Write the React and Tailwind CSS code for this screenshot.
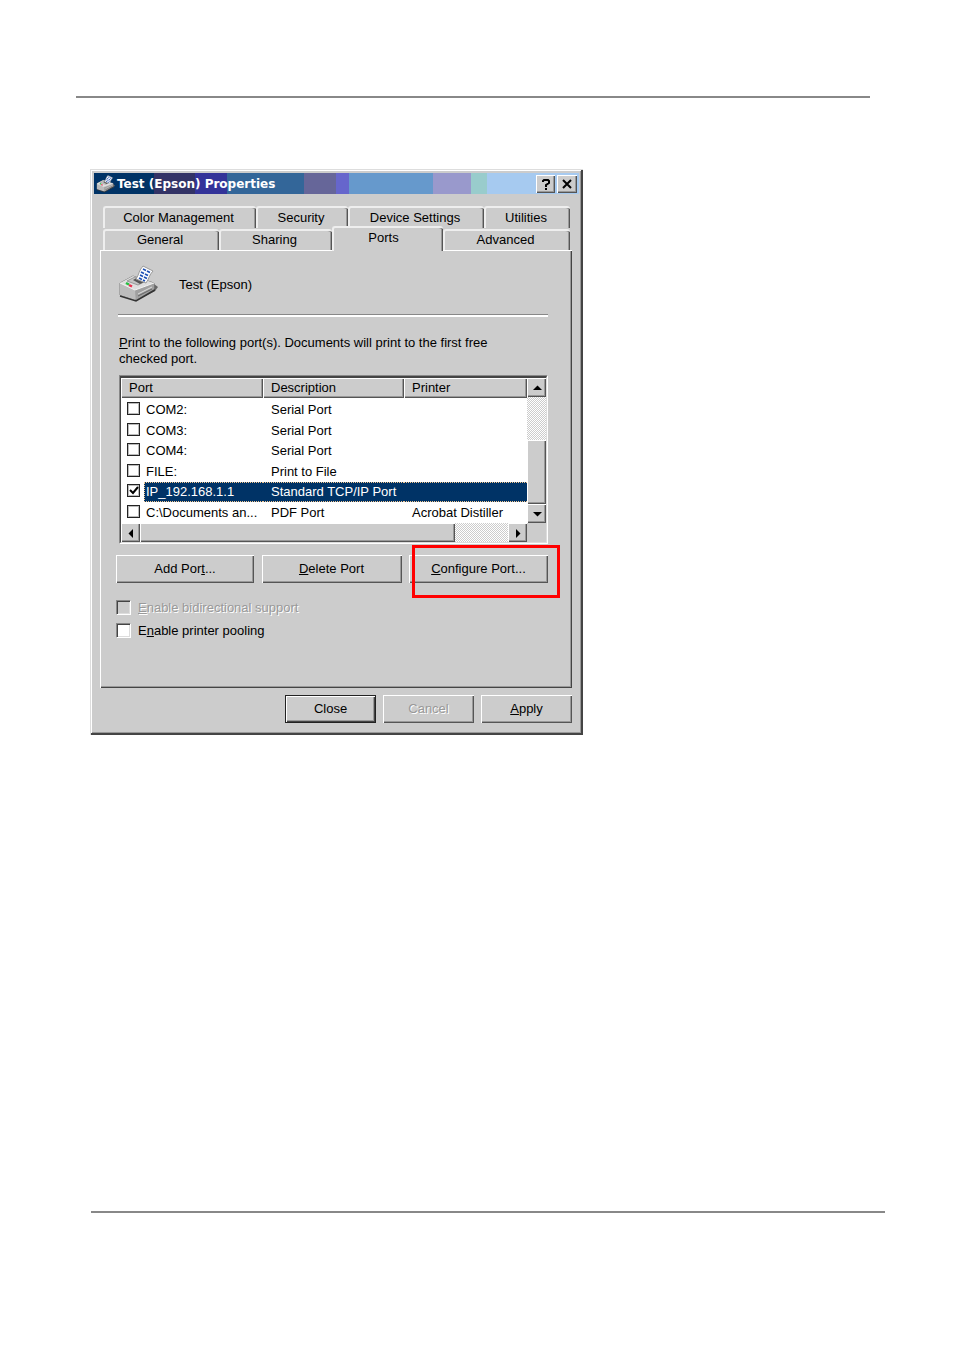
import { useState } from "react";

const RAISED =
  "bg-[#ccc] shadow-[inset_1px_1px_0_#fff,inset_-1px_-1px_0_#555,inset_-2px_-2px_0_#999]";

const TITLE_COLORS =
  "bg-[linear-gradient(90deg,#003366_60px,#333366_60px_101px,#333399_101px_133px,#336699_133px_210px,#666699_210px_242px,#6666cc_242px_255px,#6699cc_255px_339px,#9999cc_339px_377px,#99cccc_377px_393px,#a6caf0_393px)]";

const TRACK = "bg-[repeating-conic-gradient(#fff_0_25%,#ccc_0_50%)] bg-[length:2px_2px]";

const PORTS = [
  { name: "COM2:", description: "Serial Port", printer: "" },
  { name: "COM3:", description: "Serial Port", printer: "" },
  { name: "COM4:", description: "Serial Port", printer: "" },
  { name: "FILE:", description: "Print to File", printer: "" },
  { name: "IP_192.168.1.1", description: "Standard TCP/IP Port", printer: "" },
  { name: "C:\\Documents an...", description: "PDF Port", printer: "Acrobat Distiller" },
];

const PrinterIcon = ({ className }) => (
  <svg viewBox="0 0 40 38" className={className} aria-hidden="true">
    <path d="M19 35 37 26l3-4-4-3Z" fill="#666" />
    <path d="M2 18 15 11 36 18v6L18 35 2 30Z" fill="#b4b4b4" stroke="#808080" strokeLinejoin="round" />
    <path d="M2 18 15 11 36 18 17 25Z" fill="#dedede" />
    <path d="M2 18v12l15 5V25Z" fill="#bcbcbc" />
    <path d="M17 25 36 18v6L18 35Z" fill="#a0a0a0" />
    <path d="M2 18 17 25 36 18" fill="none" stroke="#f4f4f4" />
    <path d="M2 31 18 36 37 25" fill="none" stroke="#333" strokeWidth="1.5" />
    <path d="M20 29 34 22" stroke="#ddd" />
    <path d="M20 31 34 24" stroke="#666" />
    <path d="M9 16 17 12 28 16 20 20Z" fill="#c4c4c4" stroke="#999" />
    <path d="M15 15 22 11 30 15 22 19Z" fill="#555" />
    <path d="M18 14C21 10 21 5 25 1l10 5c-4 4-4 8-7 12Z" fill="#fff" stroke="#999" />
    <path
      d="m25 4 3 1.500m1 .5 3 1.500M23 7l3 1.500m1 .5 3 1.500M22 10l3 1.500m1 .5 3 1.500M21 13l3 1.500m1 .5 2 1"
      stroke="#1c4fb4"
      strokeWidth="1.800"
    />
    <path d="m8 18 3 1.500" stroke="#22c040" strokeWidth="2.500" />
    <path d="m11 20 3 1.500" stroke="#e8304c" strokeWidth="2.500" />
  </svg>
);

const Tab = ({ children, className, selected }) => (
  <button
    type="button"
    role="tab"
    aria-selected={!!selected}
    className={`rounded-t-[3px] border-t-2 border-l-2 border-t-[#eee] border-l-[#eee] bg-[#ccc] pr-1 text-center shadow-[inset_-1px_0_0_#555,inset_-2px_0_0_#999] ${className}`}
  >
    {children}
  </button>
);

const PushButton = ({ children, className = "", ...props }) => (
  <button type="button" className={`h-7 pb-px ${RAISED} ${className}`} {...props}>
    {children}
  </button>
);

const ScrollButton = ({ label, d }) => (
  <button
    type="button"
    aria-label={label}
    className={`flex h-[19px] w-[19px] shrink-0 items-center justify-center ${RAISED}`}
  >
    <svg viewBox="0 0 10 10" className="h-[10px] w-[10px]">
      <path d={d} fill="#000" />
    </svg>
  </button>
);

const PortRow = ({ port, selected, onSelect }) => (
  <tr onClick={onSelect}>
    <td className="p-0">
      <label className="flex h-5 items-center pl-[6px]">
        <span className="grid h-4 w-[17px] shrink-0">
          <input
            type="checkbox"
            checked={selected}
            onChange={onSelect}
            className="col-start-1 row-start-1 h-[13px] w-[13px] appearance-none border border-[#222] bg-white shadow-[inset_0_0_0_1px_#bbb]"
          />
          {selected && (
            <svg viewBox="0 0 13 13" className="pointer-events-none col-start-1 row-start-1 h-[13px] w-[13px]">
              <path d="m3 6 3 3 5-6" fill="none" stroke="#000" strokeWidth="2" />
            </svg>
          )}
        </span>
        <span
          className={`flex h-5 grow items-center pl-px whitespace-nowrap ${
            selected
              ? "border-y border-l border-dotted border-y-[#f4c890] border-l-[#f4c890] bg-[#003366] text-white"
              : "border-l border-l-transparent"
          }`}
        >
          {port.name}
        </span>
      </label>
    </td>
    {[port.description, port.printer].map((text, i) => (
      <td key={i} className="p-0">
        <div
          className={`flex h-5 items-center pl-2 whitespace-nowrap ${
            selected ? "border-y border-dotted border-[#f4c890] bg-[#003366] text-white" : ""
          }`}
        >
          {text}
        </div>
      </td>
    ))}
  </tr>
);

const PortList = () => {
  const [selected, setSelected] = useState("IP_192.168.1.1");

  return (
    <div className="border border-t-[#888] border-r-white border-b-white border-l-[#888] bg-[#ccc]">
      <div className="border-t-2 border-r border-b border-l border-[#444] border-r-[#ddd] border-b-[#ddd]">
        <div className="flex">
          <div className="h-[145px] grow overflow-hidden bg-white">
            <table className="h-[145px] w-full table-fixed border-collapse">
              <thead>
                <tr>
                  {["Port", "Description", "Printer"].map((title, i) => (
                    <th
                      key={title}
                      className={`h-[22px] p-0 text-left align-top font-normal ${
                        i === 0 ? "w-[142px]" : i === 1 ? "w-[141px]" : ""
                      }`}
                    >
                      <div className={`flex h-5 items-center pl-2 ${RAISED}`}>{title}</div>
                    </th>
                  ))}
                </tr>
              </thead>
              <tbody>
                {PORTS.map((port) => (
                  <PortRow
                    key={port.name}
                    port={port}
                    selected={port.name === selected}
                    onSelect={() => setSelected(port.name)}
                  />
                ))}
              </tbody>
            </table>
          </div>
          <div className={`flex w-[19px] shrink-0 flex-col ${TRACK}`}>
            <ScrollButton label="Scroll up" d="M1 7h9L5.500 2.500Z" />
            <div className="grow" />
            <div className={`h-16 ${RAISED}`} />
            <ScrollButton label="Scroll down" d="M1 3h9L5.500 7.500Z" />
          </div>
        </div>
        <div className="flex">
          <div className={`flex grow ${TRACK}`}>
            <ScrollButton label="Scroll left" d="M7 1v9L2.500 5.500Z" />
            <div className={`w-[315px] ${RAISED}`} />
            <div className="grow" />
            <ScrollButton label="Scroll right" d="M3 1v9L7.500 5.500Z" />
          </div>
          <div className="w-[19px]" />
        </div>
      </div>
    </div>
  );
};

const CheckOption = ({ children, disabled }) => (
  <label className={`flex h-[23px] items-center gap-[7px] ${disabled ? "text-[#999] [text-shadow:1px_1px_0_#fff]" : ""}`}>
    <input
      type="checkbox"
      disabled={disabled}
      className="h-[15px] w-[15px] appearance-none border border-t-[#888] border-r-white border-b-white border-l-[#888] bg-white shadow-[inset_1px_1px_0_#444,inset_-1px_-1px_0_#ddd] disabled:bg-[#ccc]"
    />
    <span>{children}</span>
  </label>
);

const PropertiesDialog = () => (
  <section
    aria-label="Test (Epson) Properties"
    className="w-full max-w-[493px] bg-[#ccc] px-1 pt-1 pb-3 shadow-[inset_1px_1px_0_#ddd,inset_-2px_-2px_0_#444,inset_2px_2px_0_#fff,inset_-3px_-3px_0_#999]"
  >
    <header className={`flex h-[21px] items-center pr-[2px] pl-[2px] ${TITLE_COLORS}`}>
      <PrinterIcon className="h-[18px] w-[19px]" />
      <h1 className="grow pl-[2px] font-['DejaVu_Sans',sans-serif] text-[12px] font-bold whitespace-nowrap text-white">
        Test (Epson) Properties
      </h1>
      <div className="flex gap-[2px]">
        <button type="button" aria-label="Help" className={`flex h-[18px] w-[19px] items-center justify-center ${RAISED}`}>
          <svg viewBox="0 0 10 12" className="h-3 w-[10px]" fill="none" stroke="#000" strokeWidth="2">
            <path d="M2 4V3l1-1h4l1 1v2L5 7v2M5 10v2" />
          </svg>
        </button>
        <button type="button" aria-label="Close window" className={`flex h-[18px] w-5 items-center justify-center ${RAISED}`}>
          <svg viewBox="0 0 10 10" className="h-[10px] w-[10px]" fill="none" stroke="#000" strokeWidth="2">
            <path d="m1 1 8 8M9 1 1 9" />
          </svg>
        </button>
      </div>
    </header>

    <div className="pt-3 pr-[7px] pl-[6px]">
      <div role="tablist" aria-label="Printer properties" className="pr-[2px] pl-[3px]">
        <div className="flex h-[22px]">
          <Tab className="w-[153px]">Color Management</Tab>
          <Tab className="w-[92px]">Security</Tab>
          <Tab className="w-[136px]">Device Settings</Tab>
          <Tab className="grow">Utilities</Tab>
        </div>
        <div className="-mt-[2px] flex h-[25px] items-start">
          <Tab className="mt-[3px] h-[21px] w-[116px] pb-[2px]">General</Tab>
          <Tab className="mt-[3px] h-[21px] w-[113px] pb-[2px]">Sharing</Tab>
          <Tab selected className="relative z-10 h-[25px] w-[111px] pr-[10px] pb-1">
            Ports
          </Tab>
          <Tab className="mt-[3px] h-[21px] grow pb-[2px]">Advanced</Tab>
        </div>
      </div>

      <div
        role="tabpanel"
        className="-mt-px h-[438px] border-t border-l border-white pt-[14px] pr-6 pl-[15px] shadow-[inset_-1px_-1px_0_#444,inset_-2px_-2px_0_#999]"
      >
        <div className="ml-[2px] flex h-[52px] items-start gap-[21px] border-b-2 border-b-white shadow-[inset_0_-1px_0_#888]">
          <PrinterIcon className="h-[38px] w-10" />
          <span className="pt-3">Test (Epson)</span>
        </div>
        <p className="ml-[3px] pt-[18px] leading-4">
          <u>P</u>rint to the following port(s). Documents will print to the first free
          <br />
          checked port.
        </p>
        <div className="ml-[3px] pt-2">
          <PortList />
        </div>
        <div className="flex justify-between pt-[11px]">
          <PushButton className="w-[138px]">
            Add Por<u>t</u>...
          </PushButton>
          <PushButton className="w-[140px]">
            <u>D</u>elete Port
          </PushButton>
          <div className="relative">
            <PushButton className="w-[139px]">
              <u>C</u>onfigure Port...
            </PushButton>
            {/* Callout around the button */}
            <div className="pointer-events-none absolute -top-[10px] -right-3 -bottom-[15px] left-[3px] border-[3px] border-[#f00]" />
          </div>
        </div>
        <div className="pt-[13px]">
          <CheckOption disabled>
            <u>E</u>nable bidirectional support
          </CheckOption>
          <CheckOption>
            E<u>n</u>able printer pooling
          </CheckOption>
        </div>
      </div>

      <footer className="flex justify-end gap-[7px] pt-[7px]">
        <button
          type="button"
          className="h-7 w-[91px] border border-[#222] bg-[#ccc] pb-px shadow-[inset_1px_1px_0_#fff,inset_-1px_-1px_0_#444,inset_-2px_-2px_0_#999]"
        >
          Close
        </button>
        <PushButton disabled className="w-[91px] text-[#999] [text-shadow:1px_1px_0_#fff]">
          Cancel
        </PushButton>
        <PushButton className="w-[91px]">
          <u>A</u>pply
        </PushButton>
      </footer>
    </div>
  </section>
);

export default function App() {
  return (
    <main className="bg-white pt-24 pb-[138px] font-['Liberation_Sans',Arial,sans-serif] text-[13px] leading-4 text-black">
      <hr className="mr-[84px] ml-[76px] border-t-2 border-[#888]" />
      <div className="min-h-[1113px] px-[90px] pt-[71px]">
        <PropertiesDialog />
      </div>
      <hr className="mr-[69px] ml-[91px] border-t-2 border-[#888]" />
    </main>
  );
}
